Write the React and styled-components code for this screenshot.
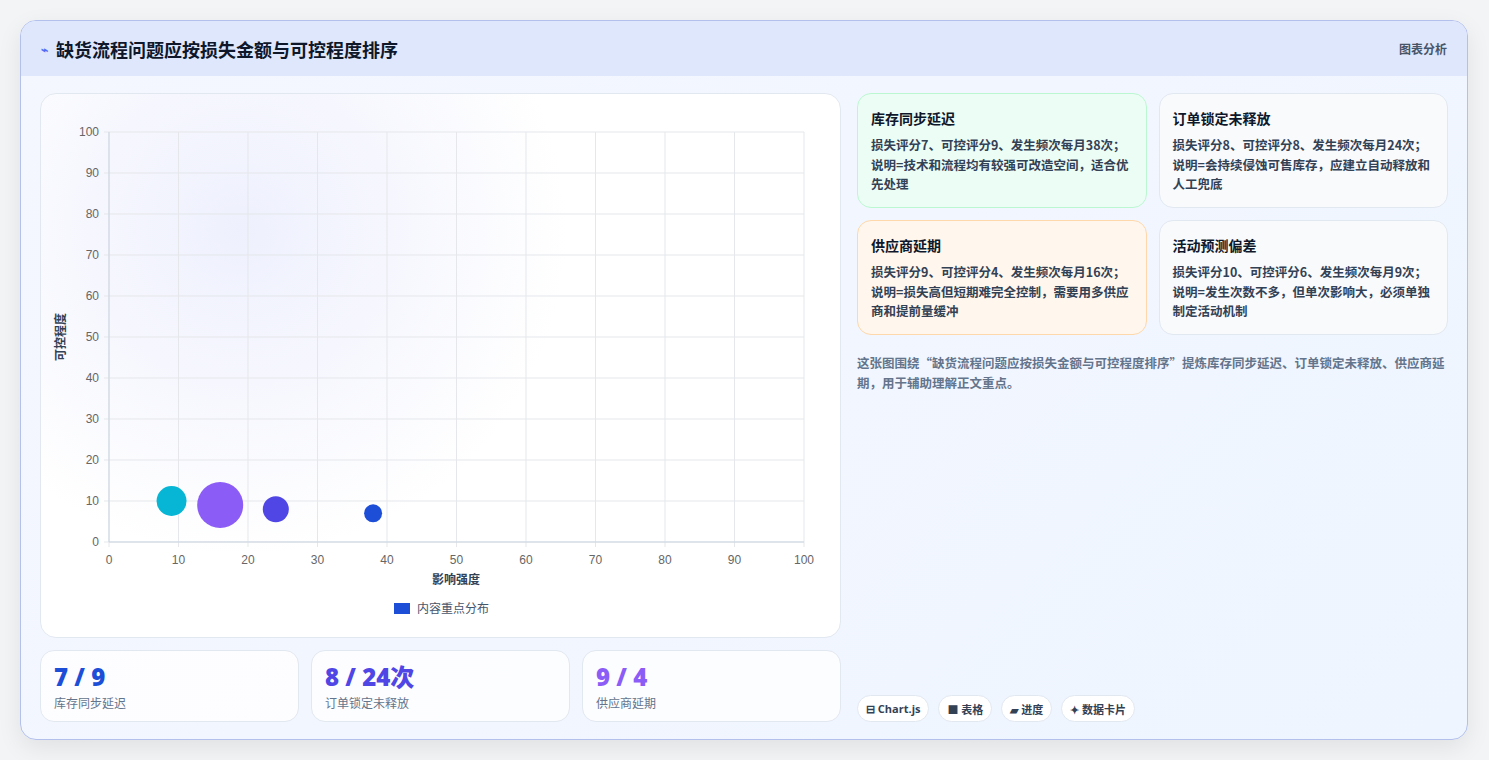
import React from "react";
import styled, { createGlobalStyle } from "styled-components";

const G = createGlobalStyle`
  body{margin:0;background:#f3f4f6;font-family:"Noto Sans CJK SC","Noto Sans",sans-serif;}
`;
const Page = styled.div`padding:20px 20px 20px 20px;height:760px;box-sizing:border-box;`;
const Frame = styled.div`
  width:1448px;height:720px;box-sizing:border-box;border:1px solid #b3c0ec;border-radius:16px;overflow:hidden;
  background:linear-gradient(135deg,#f5f7ff 0%,#eef5ff 100%);display:flex;flex-direction:column;
  box-shadow:0 8px 24px rgba(0,0,0,.08);
`;
const Header = styled.div`height:55px;flex:none;background:#dfe7fd;display:flex;align-items:center;justify-content:space-between;padding:0 20px;`;
const Title = styled.h1`margin:0;font-size:18px;font-weight:700;color:#0f172a;display:flex;align-items:center;gap:8px;`;
const Tag = styled.span`font-size:12px;color:#475569;font-weight:700;`;
const Body = styled.div`flex:1;display:grid;grid-template-columns:801px 591px;gap:16px;padding:17px 19px 18px 19px;`;
const Col = styled.div`display:flex;flex-direction:column;gap:12px;`;
const ChartCard = styled.div`height:543px;background:#fff;border:1px solid #e2e8f0;border-radius:16px;overflow:hidden;
  background:radial-gradient(circle at 25% 25%,#eef0fd 0%,#ffffff 45%);`;
const Stats = styled.div`display:grid;grid-template-columns:repeat(3,1fr);gap:12px;`;
const Stat = styled.div`height:72px;box-sizing:border-box;background:rgba(255,255,255,.8);border:1px solid #e2e8f0;border-radius:14px;padding:11px 13px;`;
const Num = styled.div`font-family:"Open Sans","Noto Sans CJK SC",sans-serif;font-size:24px;font-weight:800;color:${p=>p.c};line-height:30px;`;
const SLabel = styled.div`font-size:12px;color:#64748b;margin-top:2px;`;
const Grid = styled.div`display:grid;grid-template-columns:1fr 1fr;gap:12px;`;
const Card = styled.div`height:115px;box-sizing:border-box;border-radius:14px;padding:14px 13px;
  background:${p=>p.bg};border:1px solid ${p=>p.bd};`;
const CT = styled.div`font-size:14px;font-weight:700;color:#0f172a;margin-bottom:7px;`;
const CB = styled.div`font-size:12.5px;font-weight:700;color:#334155;line-height:19.5px;`;
const Desc = styled.p`margin:6px 0 0;font-size:12.5px;line-height:20px;color:#64748b;font-weight:700;`;
const Chips = styled.div`margin-top:auto;display:flex;gap:9px;`;
const Chip = styled.span`height:27px;box-sizing:border-box;padding:0 8px;border:1px solid #e2e8f0;border-radius:14px;background:#fff;
  font-size:11px;font-weight:700;color:#334155;display:flex;align-items:center;gap:3px;font-family:"Open Sans","Noto Sans CJK SC",sans-serif;`;

const X0=68,X1=763,Y0=448,Y1=38;
const sx=v=>X0+(X1-X0)*v/100, sy=v=>Y0-(Y0-Y1)*v/100;
const ticks=[0,10,20,30,40,50,60,70,80,90,100];
const bubbles=[[9,10,15,"#06b6d4"],[16,9,23,"#8b5cf6"],[24,8,13,"#4f46e5"],[38,7,9,"#1d4ed8"]];

function Chart(){
  return (
    <svg width="801" height="543" style={{display:"block"}}>
      {ticks.map(t=>(
        <g key={t}>
          <line x1={sx(t)} x2={sx(t)} y1={Y1} y2={Y0+5} stroke="#e5e7eb"/>
          <line x1={X0-5} x2={X1} y1={sy(t)} y2={sy(t)} stroke="#e5e7eb"/>
          <text x={sx(t)} y={Y0+22} fontSize="12" fill="#666" textAnchor="middle" fontFamily="Liberation Sans">{t}</text>
          <text x={X0-10} y={sy(t)+4} fontSize="12" fill="#666" textAnchor="end" fontFamily="Liberation Sans">{t}</text>
        </g>
      ))}
      <line x1={X0} x2={X1} y1={Y0} y2={Y0} stroke="#cbd5e1"/>
      <line x1={X0} x2={X0} y1={Y1} y2={Y0} stroke="#cbd5e1"/>
      {bubbles.map(([x,y,r,c],i)=><circle key={i} cx={sx(x)} cy={sy(y)} r={r} fill={c}/>)}
      <text x={415} y={490} fontSize="12" fontWeight="700" fill="#334155" textAnchor="middle">影响强度</text>
      <text transform="translate(24,243) rotate(-90)" fontSize="12" fontWeight="700" fill="#334155" textAnchor="middle">可控程度</text>
      <rect x={353} y={509} width={16} height={11} fill="#1d4ed8"/>
      <text x={376} y={519} fontSize="12" fill="#475569">内容重点分布</text>
    </svg>
  );
}

const cards=[
  ["库存同步延迟","损失评分7、可控评分9、发生频次每月38次；说明=技术和流程均有较强可改造空间，适合优先处理","#ecfdf5","#bbf7d0"],
  ["订单锁定未释放","损失评分8、可控评分8、发生频次每月24次；说明=会持续侵蚀可售库存，应建立自动释放和人工兜底","#f8fafc","#e2e8f0"],
  ["供应商延期","损失评分9、可控评分4、发生频次每月16次；说明=损失高但短期难完全控制，需要用多供应商和提前量缓冲","#fff7ed","#fed7aa"],
  ["活动预测偏差","损失评分10、可控评分6、发生频次每月9次；说明=发生次数不多，但单次影响大，必须单独制定活动机制","#f8fafc","#e2e8f0"],
];

export default function App(){
  return (<Page><G/>
    <Frame>
      <Header>
        <Title><span style={{color:"#4f6ef7",fontSize:12}}>⌁</span>缺货流程问题应按损失金额与可控程度排序</Title>
        <Tag>图表分析</Tag>
      </Header>
      <Body>
        <Col>
          <ChartCard><Chart/></ChartCard>
          <Stats>
            <Stat><Num c="#1d4ed8">7 / 9</Num><SLabel>库存同步延迟</SLabel></Stat>
            <Stat><Num c="#4f46e5">8 / 24次</Num><SLabel>订单锁定未释放</SLabel></Stat>
            <Stat><Num c="#8b5cf6">9 / 4</Num><SLabel>供应商延期</SLabel></Stat>
          </Stats>
        </Col>
        <Col>
          <Grid>
            {cards.map(([t,b,bg,bd])=><Card key={t} bg={bg} bd={bd}><CT>{t}</CT><CB>{b}</CB></Card>)}
          </Grid>
          <Desc>这张图围绕“缺货流程问题应按损失金额与可控程度排序”提炼库存同步延迟、订单锁定未释放、供应商延期，用于辅助理解正文重点。</Desc>
          <Chips>
            <Chip>⊟ Chart.js</Chip><Chip>■ 表格</Chip><Chip>▰ 进度</Chip><Chip>✦ 数据卡片</Chip>
          </Chips>
        </Col>
      </Body>
    </Frame>
  </Page>);
}
